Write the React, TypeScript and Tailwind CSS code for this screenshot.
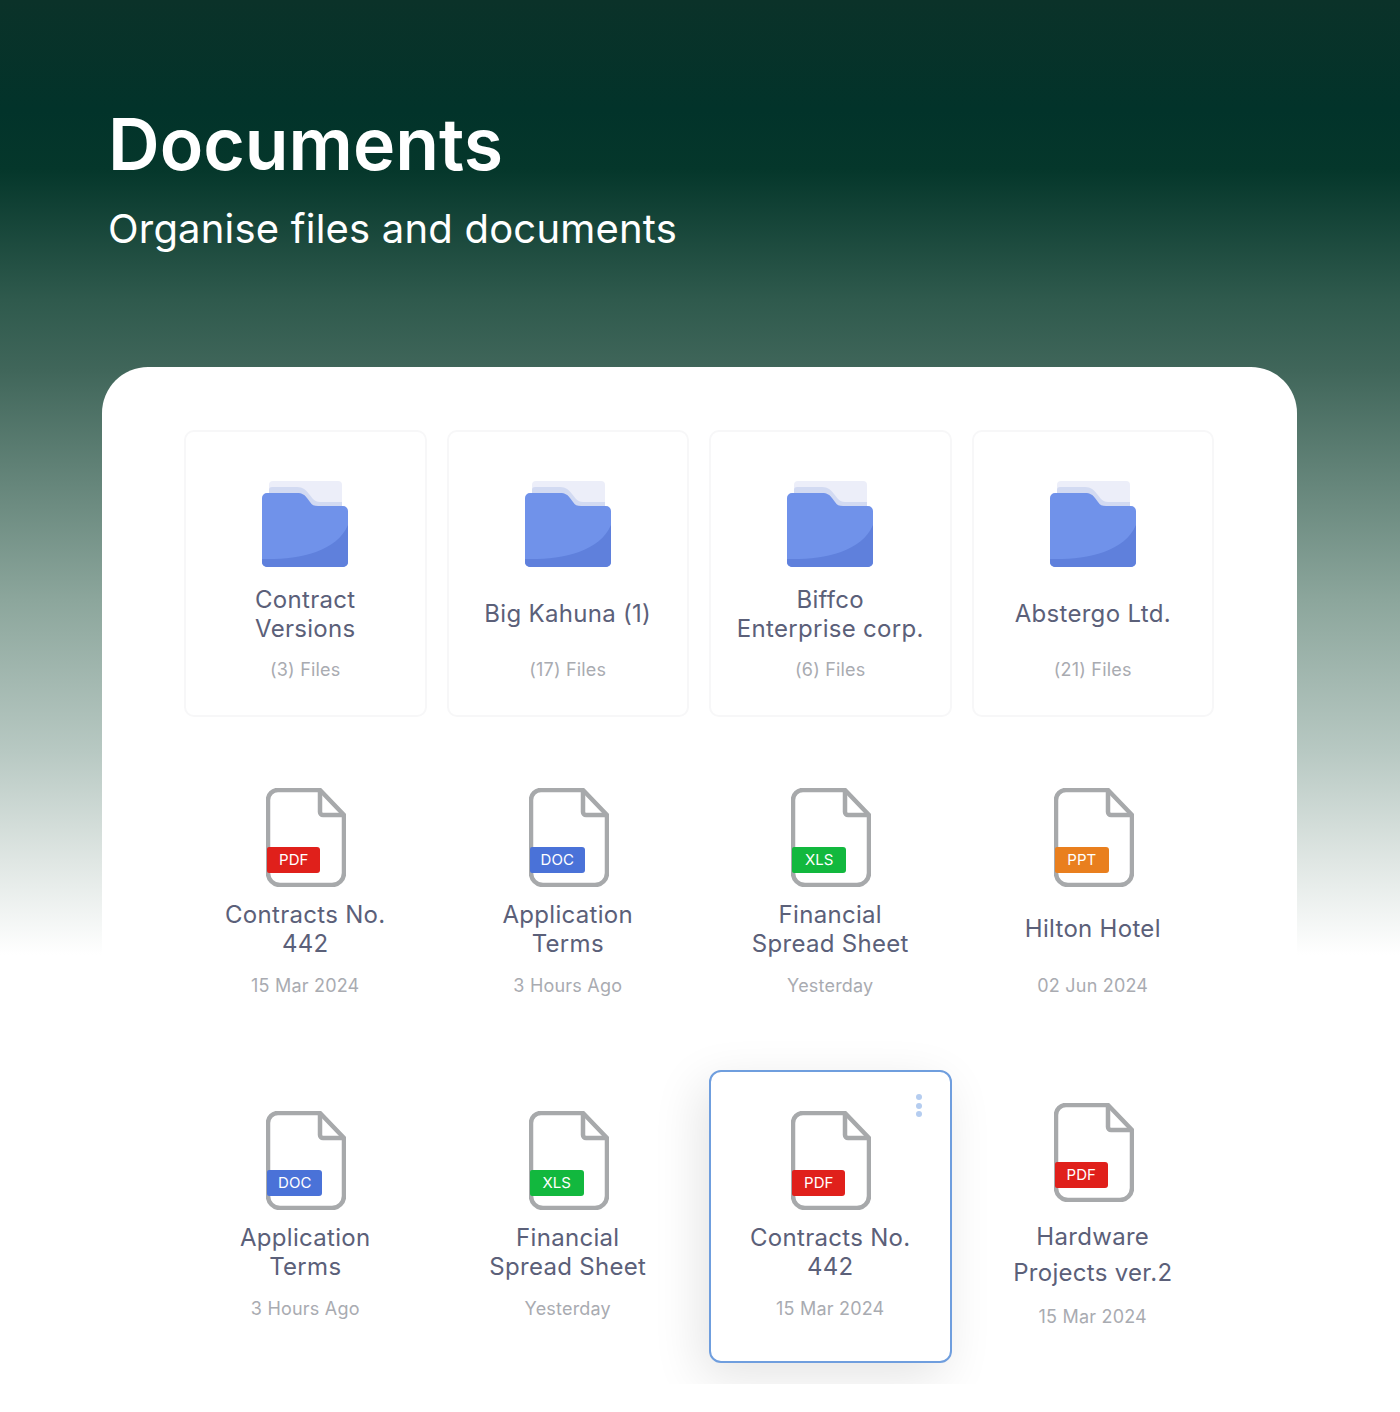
const folders = [
  { name: ['Contract', 'Versions'], files: '(3) Files' },
  { name: ['Big Kahuna (1)'], files: '(17) Files' },
  { name: ['Biffco', 'Enterprise corp.'], files: '(6) Files' },
  { name: ['Abstergo Ltd.'], files: '(21) Files' },
]

const rowOne = [
  { type: 'PDF', name: ['Contracts No.', '442'], date: '15 Mar 2024' },
  { type: 'DOC', name: ['Application', 'Terms'], date: '3 Hours Ago' },
  { type: 'XLS', name: ['Financial', 'Spread Sheet'], date: 'Yesterday' },
  { type: 'PPT', name: ['Hilton Hotel'], date: '02 Jun 2024' },
]

const rowTwo = [
  { type: 'DOC', name: ['Application', 'Terms'], date: '3 Hours Ago' },
  { type: 'XLS', name: ['Financial', 'Spread Sheet'], date: 'Yesterday' },
]

const badgeStyles: Record<string, string> = {
  PDF: 'bg-[#e0201b] w-[53px]',
  DOC: 'bg-[#4a72d8] w-[55px]',
  XLS: 'bg-[#12b83e] w-[54px]',
  PPT: 'bg-[#e97f1e] w-[54px]',
}

function FolderIcon() {
  return (
    <svg width="86" height="86" viewBox="0 0 86 86" className="block">
      <path d="M7 4a4 4 0 0 1 4-4h65a4 4 0 0 1 4 4v30H7z" fill="#eceef9" />
      <path d="M7 9a3 3 0 0 1 3-3h25c6 0 9 3 12 7l4 5c2 2 4 3 7 3h22v12H7z" fill="#d2daf2" />
      <path
        d="M5 12H35C40 12 43 14 45 17L48 21C50 24 52 25 56 25H81a5 5 0 0 1 5 5V81a5 5 0 0 1-5 5H5a5 5 0 0 1-5-5V17a5 5 0 0 1 5-5z"
        fill="#7092ea"
      />
      <path d="M86 44V81a5 5 0 0 1-5 5H5a5 5 0 0 1-5-5V78C34 79 74 72 86 44z" fill="#5f80dc" />
    </svg>
  )
}

function FileIcon({ type }: { type: string }) {
  return (
    <div className="relative ml-[2px] h-[99px] w-[80px]">
      <svg width="80" height="99" viewBox="0 0 80 99" className="block">
        <path
          d="M12 2H54L78 27V85a12 12 0 0 1-12 12H14A12 12 0 0 1 2 85V12A10 10 0 0 1 12 2z"
          fill="#fff"
          stroke="#a7a9ab"
          strokeWidth="4.5"
          strokeLinejoin="round"
        />
        <path d="M54 3V24a3 3 0 0 0 3 3H77" fill="none" stroke="#a7a9ab" strokeWidth="4.5" />
      </svg>
      <span
        className={`absolute left-[1px] top-[59px] flex h-[26px] items-center justify-center rounded-r-[3px] rounded-l-[2px] text-[15px] text-white ${badgeStyles[type]}`}
      >
        {type}
      </span>
    </div>
  )
}

function Title({ lines, wide, folder }: { lines: string[]; wide?: boolean; folder?: boolean }) {
  const spacing = wide
    ? 'mt-[18px] h-[70px] leading-[36px]'
    : folder
      ? 'mt-[17.5px] h-[58px] leading-[29px]'
      : 'mt-[11.5px] h-[60px] leading-[29px]'
  return (
    <div
      className={`flex flex-col items-center justify-center text-center text-[24px] tracking-[0.3px] text-[#5b6079] ${spacing}`}
    >
      {lines.map((line) => (
        <div key={line} className="whitespace-nowrap">
          {line}
        </div>
      ))}
    </div>
  )
}

function Meta({ children }: { children: string }) {
  return (
    <div className="mt-[15px] text-center text-[18px] leading-[24px] tracking-[0.2px] text-[#a9abb1]">
      {children}
    </div>
  )
}

function FileCard({ type, name, date }: { type: string; name: string[]; date: string }) {
  return (
    <div className="flex h-[292px] w-[242.5px] shrink-0 flex-col items-center pt-[41px]">
      <FileIcon type={type} />
      <Title lines={name} />
      <Meta>{date}</Meta>
    </div>
  )
}

export default function App() {
  return (
    <div className="h-[1412px] w-[1400px] overflow-hidden bg-[linear-gradient(180deg,#0b3229_0px,#02332a_110px,#05372b_170px,#2f5a4d_300px,#40665a_370px,#8ca69c_600px,#b7c8c2_750px,#dfe6e3_860px,#ffffff_955px)] font-['Inter',sans-serif]">
      <header className="pl-[108px] pt-[101px] text-white">
        <h1 className="text-[71.5px] font-semibold leading-[86px]">Documents</h1>
        <p className="mt-[18px] text-[40px] leading-[48px] tracking-[0.2px]">Organise files and documents</p>
      </header>

      <main className="ml-[102px] mt-[114px] h-[1017px] w-[1195px] overflow-hidden rounded-t-[46px] bg-white pl-[82px] pt-[63px]">
        <div className="flex w-[1050px] gap-5 overflow-hidden">
          {folders.map((f) => (
            <div
              key={f.files}
              className="flex h-[287px] w-[242.5px] shrink-0 flex-col items-center rounded-[10px] border-2 border-[#f7f7f8] pt-[49px]"
            >
              <FolderIcon />
              <Title folder lines={f.name} />
              <Meta>{f.files}</Meta>
            </div>
          ))}
          <div className="h-[287px] w-[242.5px] shrink-0 rounded-[10px] border-2 border-[#f7f7f8]" />
        </div>

        <div className="mt-[30px] flex gap-5">
          {rowOne.map((f) => (
            <FileCard key={f.name[0]} {...f} />
          ))}
        </div>

        <div className="mt-[31px] flex gap-5">
          {rowTwo.map((f) => (
            <FileCard key={f.name[0]} {...f} />
          ))}

          <div className="relative flex h-[293px] w-[242.5px] shrink-0 flex-col items-center rounded-[12px] border-2 border-[#6f9ede] bg-white pt-[39px] shadow-[-8px_14px_50px_rgba(0,0,0,0.11)]">
            <div className="absolute right-[28px] top-[22px] flex flex-col gap-[2.5px]">
              <span className="h-[6px] w-[6px] rounded-full bg-[#b5cdf0]" />
              <span className="h-[6px] w-[6px] rounded-full bg-[#b5cdf0]" />
              <span className="h-[6px] w-[6px] rounded-full bg-[#b5cdf0]" />
            </div>
            <FileIcon type="PDF" />
            <Title lines={['Contracts No.', '442']} />
            <Meta>15 Mar 2024</Meta>
          </div>

          <div className="flex h-[292px] w-[242.5px] shrink-0 flex-col items-center pt-[33px]">
            <FileIcon type="PDF" />
            <Title wide lines={['Hardware', 'Projects ver.2']} />
            <Meta>15 Mar 2024</Meta>
          </div>
        </div>
      </main>
    </div>
  )
}
